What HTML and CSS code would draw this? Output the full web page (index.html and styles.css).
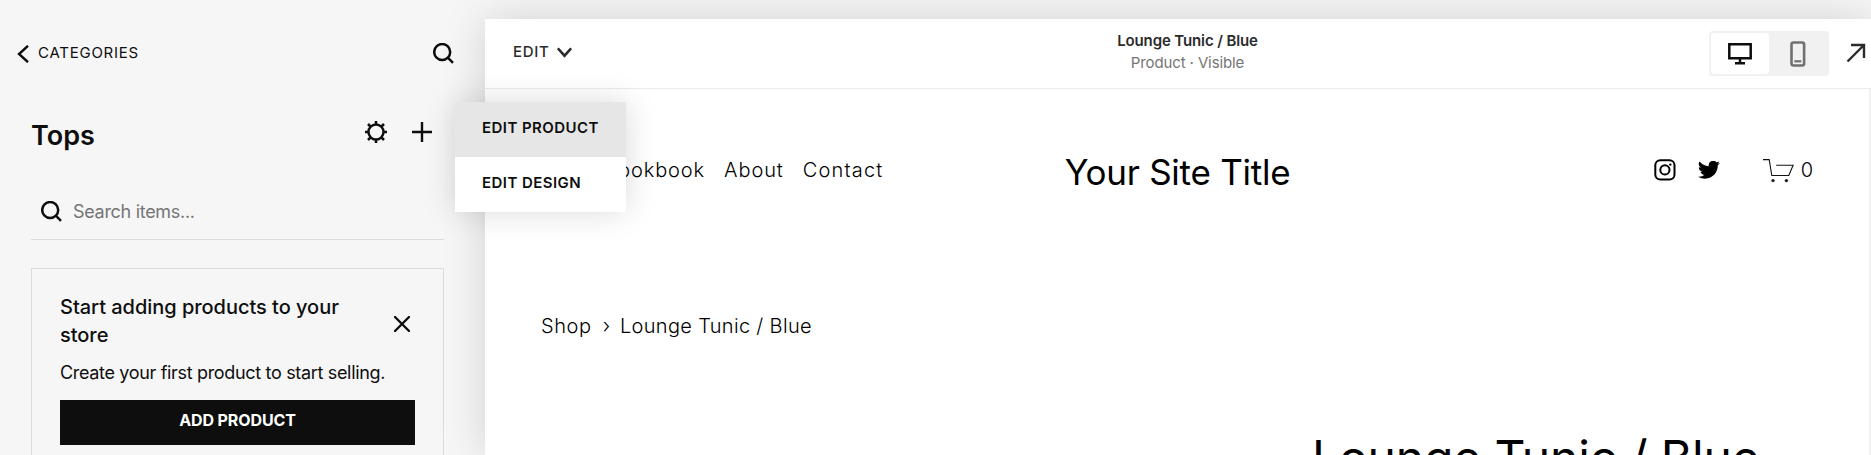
FILE: index.html
```html
<!DOCTYPE html>
<html lang="en">
<head>
<meta charset="utf-8">
<title>Tops</title>
<link rel="stylesheet" href="styles.css">
</head>
<body>
<aside class="sidebar">
  <div class="crumb-row">
    <a class="back">
      <svg width="12" height="18" viewBox="0 0 12 18"><path d="M11 0.8 2 9l9 8.2" fill="none" stroke="#0e0e0e" stroke-width="2.4"/></svg>
      <span class="back-label">CATEGORIES</span>
    </a>
    <svg class="lens" width="21" height="21" viewBox="0 0 21 21"><circle cx="9.2" cy="9" r="8" /><path d="M14.5 14.4 20 19.8"/></svg>
  </div>
  <div class="title-row">
    <h1 class="title">Tops</h1>
    <div class="actions">
      <svg width="22" height="22" viewBox="0 0 22 22" fill="none" stroke="#0e0e0e"><circle cx="11" cy="11" r="7.5" stroke-width="2.4"/><path stroke-width="2.6" d="M11 0v3.5M11 18.5V22M0 11h3.5M18.5 11H22M3 3l2.6 2.6M16.4 16.4 19 19M3 19l2.6-2.6M16.4 5.6 19 3"/></svg>
      <svg width="20" height="20" viewBox="0 0 20 20"><path d="M10 0v20M0 10h20" stroke="#0e0e0e" stroke-width="2.4"/></svg>
    </div>
  </div>
  <div class="search">
    <svg class="lens" width="21" height="21" viewBox="0 0 21 21"><circle cx="9.2" cy="9" r="8" /><path d="M14.5 14.4 20 19.8"/></svg>
    <span class="search-hint">Search items...</span>
  </div>
  <section class="card">
    <div class="card-head">
      <h2 class="card-title">Start adding products to your store</h2>
      <svg width="16" height="16" viewBox="0 0 16 16"><path d="M1 1l14 14M15 1 1 15" stroke="#0e0e0e" stroke-width="2.4" stroke-linecap="round"/></svg>
    </div>
    <p class="card-text">Create your first product to start selling.</p>
    <div class="button"><span class="button-label">ADD PRODUCT</span></div>
  </section>
</aside>
<main class="preview">
  <header class="toolbar">
    <div class="edit"><span class="edit-label">EDIT</span>
      <svg width="15" height="11" viewBox="0 0 15 11"><path d="M0.8 1.3 7.5 8.7l6.7-7.4" fill="none" stroke="#2b2b2b" stroke-width="2.6"/></svg>
    </div>
    <div class="page-info">
      <div class="page-name">Lounge Tunic / Blue</div>
      <div class="page-status">Product · Visible</div>
    </div>
    <div class="tools">
      <div class="toggle">
        <div class="device active"><svg width="24" height="22" viewBox="0 0 24 22"><path d="M1.3 1.3h21.4v14H1.3zM12 15v5.5M7 20.2h10" fill="none" stroke="#0e0e0e" stroke-width="2.5"/></svg></div>
        <div class="device"><svg width="16" height="26" viewBox="0 0 16 26"><rect x="1.5" y="1.5" width="12.6" height="23" rx="2" fill="none" stroke="#707070" stroke-width="2.6"/><path d="M4.3 20.3h7" stroke="#707070" stroke-width="2.2"/></svg></div>
      </div>
      <svg width="20" height="20" viewBox="0 0 20 20"><path d="M1.5 18.5 18 2M5 2h13v13" fill="none" stroke="#2b2b2b" stroke-width="2.4"/></svg>
    </div>
  </header>
  <div class="site">
    <div class="site-head">
      <nav class="nav"><a>Lookbook</a><a>About</a><a class="wide">Contact</a></nav>
      <div class="site-title">Your Site Title</div>
      <div class="social">
        <svg width="22" height="22" viewBox="0 0 22 22" fill="none" stroke="#000" stroke-width="2"><rect x="1.3" y="1.3" width="19.2" height="19.2" rx="5"/><circle cx="10.9" cy="10.9" r="4.6"/><circle cx="16.3" cy="5.6" r="1.2" fill="#000" stroke="none"/></svg>
        <svg class="bird" width="22" height="18" viewBox="0 2.5 24 19.6"><path d="M23.95 4.57a10 10 0 0 1-2.82.77 4.96 4.96 0 0 0 2.16-2.72 9.9 9.9 0 0 1-3.12 1.19 4.92 4.92 0 0 0-8.39 4.48C7.69 8.1 4.07 6.13 1.64 3.16a4.92 4.92 0 0 0 1.52 6.57 4.9 4.9 0 0 1-2.23-.61v.06a4.92 4.92 0 0 0 3.95 4.83 5 5 0 0 1-2.21.08 4.94 4.94 0 0 0 4.6 3.42A9.87 9.87 0 0 1 0 19.54a14 14 0 0 0 7.55 2.21c9.05 0 14-7.5 14-13.98 0-.21 0-.42-.02-.63a9.94 9.94 0 0 0 2.42-2.57z"/></svg>
        <svg class="cart" width="31" height="25" viewBox="0 0 31 25"><path d="M0 1.6h6.2l2.6 15.9h17l4.3-10.3H13.2" fill="none" stroke="#111" stroke-width="1.1"/><circle cx="10" cy="22.6" r="1.7" fill="#222"/><circle cx="23.4" cy="22.6" r="1.7" fill="#222"/></svg>
        <span class="count">0</span>
      </div>
    </div>
    <div class="trail"><span class="trail-shop">Shop</span><span class="trail-sep">›</span><span class="trail-item">Lounge Tunic / Blue</span></div>
    <h2 class="product">Lounge Tunic / Blue</h2>
  </div>
</main>
<div class="menu">
  <div class="menu-item selected">EDIT PRODUCT</div>
  <div class="menu-item">EDIT DESIGN</div>
</div>
</body>
</html>
```
FILE: styles.css
```css
* { box-sizing: border-box; }
html { overflow: hidden; }
body {
  margin: 0;
  width: 1871px;
  height: 455px;
  overflow: hidden;
  display: flex;
  position: relative;
  background: #f6f6f6;
  color: #0e0e0e;
  font-family: Inter, "Liberation Sans", sans-serif;
  white-space: nowrap;
}
h1, h2, p { margin: 0; }
svg { display: block; flex: none; }
.lens { fill: none; stroke: #0e0e0e; stroke-width: 2.5; }

.sidebar { flex: none; width: 485px; height: 455px; overflow: hidden; padding: 41px 41px 0 31px; }
.crumb-row { display: flex; justify-content: space-between; align-items: center; height: 24px; margin: 0 -10px 0 -14px; }
.back { display: flex; align-items: center; gap: 9px; }
.back svg { position: relative; top: 1px; }
.back-label { margin-top: -2px; font-size: 15px; line-height: 23px; letter-spacing: 0.75px; }
.title-row { display: flex; justify-content: space-between; height: 40px; margin-top: 50px; }
.title { font-size: 27px; line-height: 41px; font-weight: 600; letter-spacing: 0; }
.actions { display: flex; gap: 25px; align-items: center; height: 33px; margin-right: 12px; }
.search { display: flex; align-items: center; gap: 11px; height: 56px; margin-top: 29px; padding-left: 10px; border-bottom: 1px solid #dcdcdc; }
.search-hint { font-size: 18px; color: #757575; letter-spacing: -0.3px; }
.card { height: 240px; margin-top: 28px; padding: 24px 28px; border: 1px solid #dcdcdc; }
.card-head { display: flex; justify-content: space-between; align-items: center; padding-right: 5px; }
.card-head svg { position: relative; top: 3px; }
.card-title { width: 300px; font-size: 20px; line-height: 28px; font-weight: 500; white-space: normal; letter-spacing: -0.03px; }
.card-text { margin-top: 10px; font-size: 18px; line-height: 27px; letter-spacing: -0.33px; }
.button { display: flex; justify-content: center; height: 45px; margin-top: 14px; background: #0e0e0e; color: #fff; }
.button-label { font-size: 16px; line-height: 41px; font-weight: 700; letter-spacing: -0.1px; }

.preview { flex: none; width: 1386px; height: 436px; overflow: hidden; margin-top: 19px; background: #fff; box-shadow: 0 0 40px rgba(0, 0, 0, 0.15); }
.toolbar { display: grid; grid-template-columns: 1fr 200px 1fr; height: 70px; padding: 0 6px 0 28px; border-bottom: 1px solid #ebebeb; color: #2b2b2b; }
.edit { display: flex; gap: 7px; height: 66px; align-items: center; }
.edit-label { margin-top: -2px; font-size: 15px; font-weight: 500; letter-spacing: 0.7px; }
.page-info { padding: 11px 3px 0 0; text-align: center; font-size: 15px; line-height: 22px; }
.page-name { font-weight: 600; letter-spacing: -0.12px; }
.page-status { color: #757575; letter-spacing: -0.12px; }
.tools { display: flex; justify-content: flex-end; align-items: flex-start; gap: 17px; padding-top: 12px; margin-right: -1px; }
.tools > svg { margin-top: 12px; }
.toggle { display: flex; width: 120px; height: 45px; padding: 2px; border-radius: 4px; background: #f1f1f1; }
.device { display: flex; flex: 1; align-items: center; justify-content: center; height: 41px; border-radius: 3px; }
.device.active { background: #fff; }

.site { width: 1384px; height: 366px; padding-top: 51px; box-shadow: 2px 0 0 #f1f1f1; color: #000; }
.site-head { display: grid; grid-template-columns: 1fr 240px 1fr; height: 64px; padding: 0 56px; }
.nav { display: flex; gap: 19px; padding-left: 65px; font-size: 20px; line-height: 60px; font-weight: 300; letter-spacing: 0.9px; }
.nav .wide { letter-spacing: 1.2px; }
.site-title { font-size: 35px; line-height: 64px; text-align: center; letter-spacing: -0.25px; padding-left: 1px; }
.social { display: flex; justify-content: flex-end; align-items: center; height: 60px; }
.bird { margin-left: 22px; }
.cart { margin-left: 43px; }
.count { margin-left: 7px; font-size: 20px; font-weight: 300; }
.trail { display: flex; height: 30px; margin: 107px 0 0 56px; font-size: 20px; line-height: 30px; font-weight: 300; }
.trail-shop { letter-spacing: 0.6px; }
.trail-sep { margin: 0 10px 0 11px; }
.trail-item { letter-spacing: 0.32px; }
.product { margin: 87px 0 0 827px; font-size: 48px; line-height: 60px; font-weight: 400; letter-spacing: -0.15px; }

.menu { position: absolute; left: 455px; top: 102px; width: 171px; box-shadow: 0 0 30px rgba(0, 0, 0, 0.15); background: #fff; }
.menu-item { height: 55px; padding-left: 27px; font-size: 15px; line-height: 51px; font-weight: 600; letter-spacing: 0.45px; }
.menu-item.selected { background: #e6e6e6; }
```
